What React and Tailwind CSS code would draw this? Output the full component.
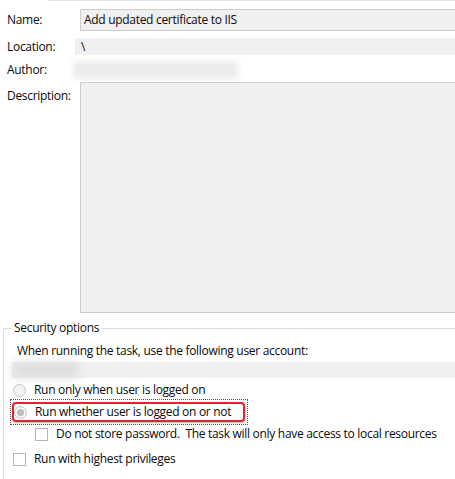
const font = { fontFamily: '"Open Sans", "Noto Sans", sans-serif' };

const Radio = ({ checked }) => (
  <span className="w-[13px] h-[13px] rounded-full border border-[#c4c4c4] bg-[#f4f4f4] flex items-center justify-center shrink-0">
    {checked && <span className="w-[7px] h-[7px] rounded-full bg-[#bdbdbd]" />}
  </span>
);

const Checkbox = () => (
  <span className="w-[13px] h-[13px] border border-[#b5b5b5] bg-white shrink-0" />
);

export default function App() {
  return (
    <div
      className="w-[455px] h-[479px] bg-white relative overflow-hidden text-[12px] text-[#0a0a0a] tracking-[-0.3px]"
      style={font}
    >
      <div className="h-[2px] ml-[48px] border-t border-[#e4e4e4]" />

      {/* Name */}
      <div className="flex items-center mt-[7px] h-[22px]">
        <span className="w-[80px] pl-[7px]">Name:</span>
        <div className="flex-1 h-[22px] bg-[#f0f0f0] border border-[#cdcdcd] border-r-0 flex items-center pl-[3px]">
          Add updated certificate to IIS
        </div>
      </div>

      {/* Location */}
      <div className="flex items-center mt-[7px] h-[17px]">
        <span className="w-[75px] pl-[7px]">Location:</span>
        <div className="flex-1 h-[17px] bg-[#f0f0f0] flex items-center pl-[6px]">\</div>
      </div>

      {/* Author */}
      <div className="flex items-center mt-[6px] h-[18px]">
        <span className="w-[73px] pl-[7px]">Author:</span>
        <div className="w-[165px] h-[18px] bg-[#ececec] blur-[3px]" />
      </div>

      {/* Description */}
      <div className="flex mt-[3px]">
        <span className="w-[80px] pl-[7px] pt-[5px]">Description:</span>
        <div className="flex-1 h-[231px] bg-[#f0f0f0] border border-[#cdcdcd] border-r-0" />
      </div>

      {/* Security options */}
      <div className="relative mt-[15px] ml-[3px] h-[152px] border border-[#dcdcdc] border-r-0 rounded-tl-[2px]">
        <span className="absolute -top-[10px] left-[8px] bg-white px-[2px] leading-[18px]">
          Security options
        </span>
        <div className="pl-[13px] pt-[13px] leading-[18px]">
          When running the task, use the following user account:
        </div>
        <div className="ml-[8px] mt-[2px] h-[16px] bg-[#f0f0f0] flex">
          <div className="w-[66px] h-[16px] bg-[#dedede] blur-[4px]" />
        </div>

        <div className="flex items-center gap-[8px] ml-[9px] mt-[3px] h-[18px]">
          <Radio />
          <span>Run only when user is logged on</span>
        </div>

        <div className="relative ml-[6px] w-[238px] h-[26px] border border-dotted border-[#555]">
          <div className="absolute left-[1px] top-[2px] w-[233px] h-[20px] border-2 border-[#e3222b] rounded-[4px] shadow-[0_1px_2px_rgba(0,0,0,0.3)]" />
          <div className="flex items-center gap-[8px] pl-[3px] h-full">
            <Radio checked />
            <span>Run whether user is logged on or not</span>
          </div>
        </div>

        <div className="flex items-center gap-[8px] ml-[31px] h-[18px]">
          <Checkbox />
          <span>Do not store password.&nbsp; The task will only have access to local resources</span>
        </div>

        <div className="flex items-center gap-[8px] ml-[9px] mt-[7px] h-[18px]">
          <Checkbox />
          <span>Run with highest privileges</span>
        </div>
      </div>
    </div>
  );
}
